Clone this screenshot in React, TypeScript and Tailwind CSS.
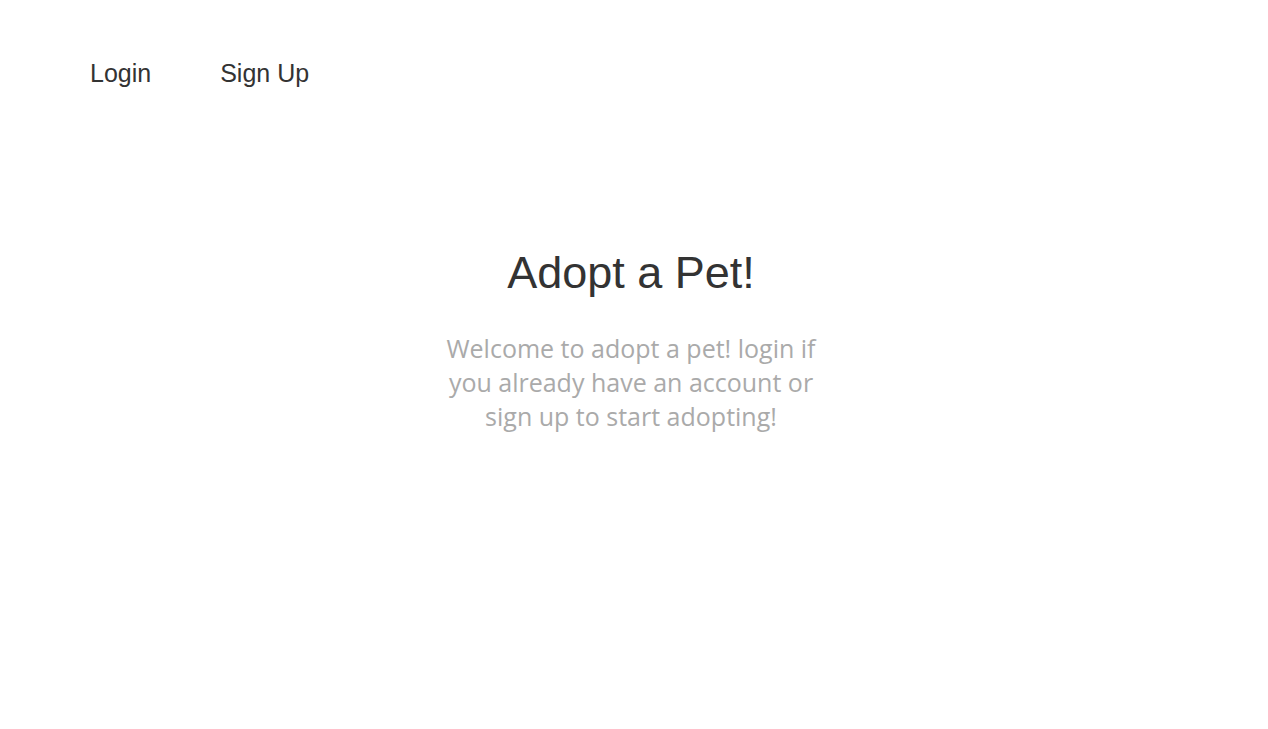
export default function App() {
  return (
    <div className="min-h-[729px] w-full bg-white text-[#333]">
      <nav className="flex items-center gap-[69px] pl-[90px] pt-[59px] font-['Liberation_Sans',Arial,sans-serif] text-[25px] leading-[29px]">
        <a href="#" className="text-[#333]">
          Login
        </a>
        <a href="#" className="text-[#333]">
          Sign Up
        </a>
      </nav>
      <main className="mt-[159px] flex flex-col items-center pr-[6px] text-center">
        <h1 className="font-['Liberation_Sans',Arial,sans-serif] text-[45px] leading-[52px] text-[#333]">
          Adopt a Pet!
        </h1>
        <p className="mt-[32px] w-[380px] font-['Open_Sans',sans-serif] text-[25px] leading-[34px] text-[#aaa]">
          Welcome to adopt a pet! login if you already have an account or sign up to start adopting!
        </p>
      </main>
    </div>
  );
}
